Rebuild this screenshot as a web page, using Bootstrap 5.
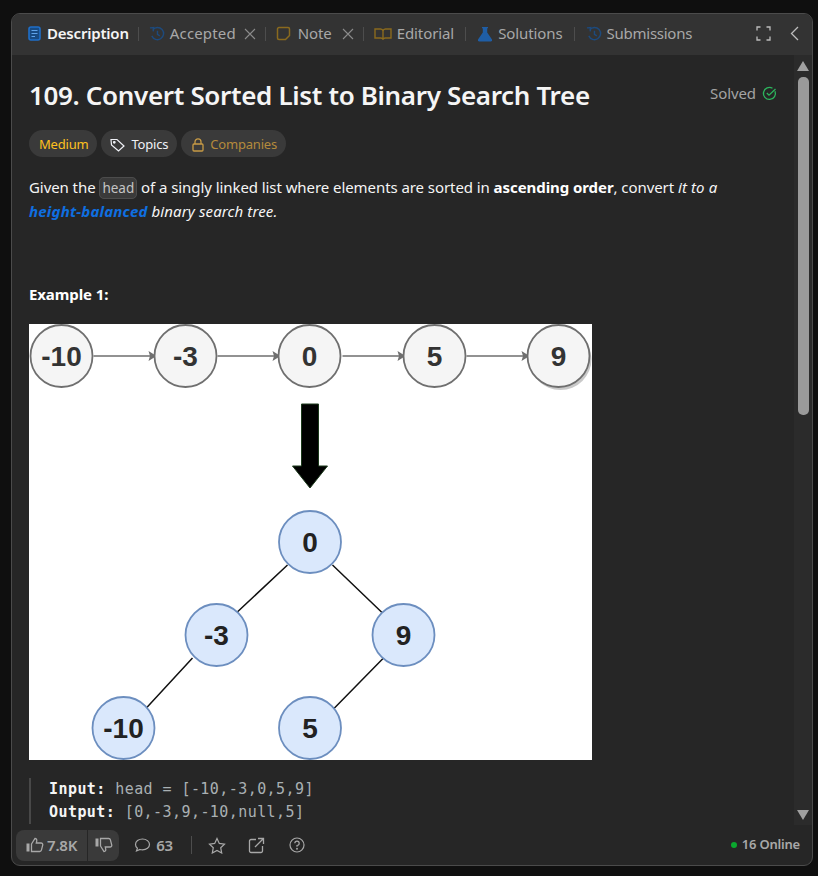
<!DOCTYPE html>
<html lang="en">
<head>
  <meta charset="UTF-8" />
  <meta name="viewport" content="width=device-width, initial-scale=1.0"/>
  <title>109. Convert Sorted List to Binary Search Tree</title>
  <link href="https://cdn.jsdelivr.net/npm/bootstrap@5.3.3/dist/css/bootstrap.min.css" rel="stylesheet"/>
  <style>
    html, body { height: 876px; overflow: hidden; }
    body { background: #0f0f0f; color: #eff1f6; font-family: "Noto Sans", "Open Sans", sans-serif; font-size: 14px; padding: 13px 5px 10px 11px; }
    .lc-panel { height: 853px; background: #262626; border: 1px solid #4b4b4b; border-radius: 9px; overflow: hidden; }
    .lc-tabs { height: 41px; background: #333; padding: 0 13px 2px 16px; flex: none; }
    .lc-tab { font-size: 15px; color: #a8a8a8; letter-spacing: -.1px; white-space: nowrap; gap: 5px; }
    .lc-tab.on { color: #f5f5f5; font-weight: 600; gap: 6px; letter-spacing: -.2px; }
    .lc-tab.roomy { letter-spacing: .15px; }
    .lc-tab.note { gap: 7px; }
    .lc-tab.tight { letter-spacing: -.25px; }
    .lc-sep { width: 1px; height: 14px; background: #4d4d4d; margin: 0 10px 0 9px; flex: none; }
    .lc-sep.wide { margin: 0 11px 0 11px; }
    .lc-x { margin-left: 3px; }
    .lc-tools { gap: 19px; }
    .lc-body { min-height: 0; }
    .lc-content { padding: 0 0 0 17px; min-width: 0; overflow: hidden; }
    .lc-head { margin-top: 23px; }
    .lc-title { font-size: 26px; font-weight: 600; line-height: 34px; letter-spacing: -.34px; color: #f5f5f5; margin: 0; white-space: nowrap; }
    .lc-solved { font-size: 15px; color: #a3a3a3; letter-spacing: -.1px; margin: 0 17px 0 0; padding-bottom: 3px; gap: 6px; }
    .lc-pills { margin-top: 18px; gap: 4px; }
    .lc-pill { height: 27px; border-radius: 14px; background: #3a3a3a; font-size: 13px; letter-spacing: -.2px; padding: 2px 9px 0; gap: 6px; }
    .lc-pill.level { color: #ffc01e; padding: 2px 9px 0 10px; }
    .lc-pill.topics { color: #eff1f6; }
    .lc-pill.locked { color: #b48a3c; padding: 2px 9px 0 11px; }
    .lc-desc { font-size: 15px; line-height: 24px; letter-spacing: -.07px; color: #f5f5f5; margin: 18px 0 0; width: 720px; }
    .lc-desc b { font-weight: 700; color: #fff; }
    .lc-desc i { letter-spacing: .12px; }
    .lc-code { font-family: "Noto Sans", sans-serif; font-size: 13.5px; line-height: 1; color: #c4c4c4; background: #3a3a3a; border: 1px solid #4c4c4c; border-radius: 5px; padding: 1px 2px; letter-spacing: 0; }
    .lc-link { color: #0f6fe0; font-weight: 700; font-style: italic; letter-spacing: .2px; }
    .lc-ex { font-size: 15px; font-weight: 700; letter-spacing: -.1px; color: #fff; line-height: 20px; margin: 61px 0 20px; }
    .lc-img { display: block; width: 563px; height: 436px; background: #fff; }
    .lc-pre { font-family: "DejaVu Sans Mono", monospace; font-size: 15px; line-height: 23px; color: #a9b0b3; border-left: 2px solid #484848; margin: 18px 0 0; padding: 0 0 0 18px; white-space: pre; letter-spacing: .43px; }
    .lc-pre b { color: #f5f5f5; font-weight: 700; }
    .lc-scroll { width: 18px; flex: none; background: #2b2b2b; padding: 6px 0 5px; }
    .lc-thumb { width: 11px; height: 338px; background: #9a9a9a; border-radius: 5px; margin-top: 6px; }
    .lc-arrow { width: 0; height: 0; border-left: 6.5px solid transparent; border-right: 6.5px solid transparent; }
    .lc-arrow.up { border-bottom: 10px solid #a0a0a0; }
    .lc-arrow.down { border-top: 10px solid #a0a0a0; margin-top: auto; }
    .lc-foot { height: 40px; flex: none; padding: 0 12px 0 4px; font-size: 15px; font-weight: 600; color: #a8a8a8; letter-spacing: -.2px; }
    .lc-vote { height: 31px; background: #3a3a3a; border-radius: 8px; }
    .lc-vote > div { padding: 0 10px; height: 100%; gap: 3px; }
    .lc-vote > div + div { border-left: 1px solid #262626; padding: 0 6px 0 7px; }
    .lc-comments { gap: 5px; margin-left: 15px; }
    .lc-sep.tall { margin: 0 16px 0 18px; height: 18px; }
    .lc-gap-share { margin-left: 22px; }
    .lc-gap-help { margin-left: 24px; }
    .lc-online { gap: 5px; font-size: 13px; }
    .lc-dot { width: 6px; height: 6px; background: #0aa82e; border-radius: 50%; }
    svg { flex: none; display: block; }
  </style>
</head>
<body>
  <div class="lc-panel d-flex flex-column">

    <!-- Tabs -->
    <div class="lc-tabs d-flex align-items-center">
      <div class="lc-tab on d-flex align-items-center">
        <svg width="13" height="15" viewBox="0 0 13 15" fill="none"><rect x="1" y="1" width="11" height="13" rx="2" stroke="#1f6fc9" stroke-width="1.600" fill="#174a82"/><path d="M3.500 4.500h6M3.500 7.500h6M3.500 10.500h3.500" stroke="#5fa3ea" stroke-width="1.100"/></svg>
        Description
      </div>
      <div class="lc-sep"></div>
      <div class="lc-tab roomy d-flex align-items-center">
        <svg width="16" height="16" viewBox="0 0 17 16" fill="none" stroke="#1d4a7d" stroke-width="1.500"><path d="M4 3.400A6.500 6.500 0 1 1 3 10"/><path d="M1 1.500 5 1.200 4.400 5.200"/><path d="M9 4.500v4l2.500 1.500"/></svg>
        Accepted
        <svg class="lc-x" width="12" height="12" viewBox="0 0 12 12" stroke="#8a8a8a" stroke-width="1.100"><path d="M1 1l10 10M11 1 1 11"/></svg>
      </div>
      <div class="lc-sep"></div>
      <div class="lc-tab note d-flex align-items-center">
        <svg width="15" height="15" viewBox="0 0 15 15" fill="none" stroke="#8a6a1e" stroke-width="1.500"><path d="M3 1.500h9a1.500 1.500 0 0 1 1.500 1.500v6.500l-4 4H3A1.500 1.500 0 0 1 1.500 12V3A1.500 1.500 0 0 1 3 1.500z"/></svg>
        Note
        <svg class="lc-x" width="12" height="12" viewBox="0 0 12 12" stroke="#8a8a8a" stroke-width="1.100"><path d="M1 1l10 10M11 1 1 11"/></svg>
      </div>
      <div class="lc-sep"></div>
      <div class="lc-tab d-flex align-items-center">
        <svg width="18" height="14" viewBox="0 0 18 14" fill="none" stroke="#8a6a1e" stroke-width="1.400"><path d="M1 2h5.500A2.500 2.500 0 0 1 9 4v8.500A2.500 2.500 0 0 0 6.500 11H1zM17 2h-5.500A2.500 2.500 0 0 0 9 4v8.500A2.500 2.500 0 0 1 11.500 11H17z"/></svg>
        Editorial
      </div>
      <div class="lc-sep wide"></div>
      <div class="lc-tab d-flex align-items-center">
        <svg width="16" height="16" viewBox="0 0 16 16"><path d="M5 1h6v1.200h-.8v4.300L15 13.500A1.500 1.500 0 0 1 13.700 15.500H2.300A1.500 1.500 0 0 1 1 13.500L5.800 6.500V2.200H5z" fill="#1f5ea6"/></svg>
        Solutions
      </div>
      <div class="lc-sep wide"></div>
      <div class="lc-tab tight d-flex align-items-center">
        <svg width="16" height="16" viewBox="0 0 17 16" fill="none" stroke="#1d4a7d" stroke-width="1.500"><path d="M4 3.400A6.500 6.500 0 1 1 3 10"/><path d="M1 1.500 5 1.200 4.400 5.200"/><path d="M9 4.500v4l2.500 1.500"/></svg>
        Submissions
      </div>
      <div class="lc-tools ms-auto d-flex align-items-center">
        <svg width="15" height="15" viewBox="0 0 15 15" fill="none" stroke="#bdbdbd" stroke-width="1.300"><path d="M1 4.500V1h3.500M10.500 1H14v3.500M14 10.500V14h-3.500M4.500 14H1v-3.500"/></svg>
        <svg width="9" height="15" viewBox="0 0 9 15" fill="none" stroke="#bdbdbd" stroke-width="1.300"><path d="M8 1 1.500 7.500 8 14"/></svg>
      </div>
    </div>

    <div class="lc-body d-flex flex-grow-1">
      <div class="lc-content flex-grow-1">
        <div class="lc-head d-flex justify-content-between align-items-center">
          <h1 class="lc-title">109. Convert Sorted List to Binary Search Tree</h1>
          <div class="lc-solved d-flex align-items-center">
            Solved
            <svg width="15" height="15" viewBox="0 0 15 15" fill="none" stroke="#2cb55d" stroke-width="1.300"><path d="M13 5.200A6 6 0 1 1 10.500 2.300"/><path d="M4.800 7 7 9.200 13.500 3"/></svg>
          </div>
        </div>

        <div class="lc-pills d-flex">
          <div class="lc-pill level d-flex align-items-center">Medium</div>
          <div class="lc-pill topics d-flex align-items-center">
            <svg width="15" height="14" viewBox="0 0 15 14" fill="none" stroke="#eff1f6" stroke-width="1.200"><path d="M1 1.500h6l7 6.500-5.500 5L1.500 7z"/><circle cx="4.300" cy="4.300" r=".8" fill="#eff1f6"/></svg>
            Topics
          </div>
          <div class="lc-pill locked d-flex align-items-center">
            <svg width="12" height="14" viewBox="0 0 12 14" fill="none" stroke="#c89b45" stroke-width="1.300"><rect x="1" y="6" width="10" height="7" rx="1"/><path d="M3 6V3.800a3 3 0 0 1 6 0V6"/></svg>
            Companies
          </div>
        </div>

        <p class="lc-desc">Given the <code class="lc-code">head</code> of a singly linked list where elements are sorted in <b>ascending order</b>, convert <i>it to a</i><br><span class="lc-link">height-balanced</span> <i>binary search tree.</i></p>

        <p class="lc-ex">Example 1:</p>

        <svg class="lc-img" viewBox="-0.5 0 563 436" font-family="Liberation Sans, sans-serif" font-weight="700" font-size="28" text-anchor="middle">
          <g stroke="#6f6f6f" stroke-width="1.500">
            <path d="M64 32h58M188 32h58M313 32h58M437 32h58"/>
          </g>
          <g fill="#6f6f6f">
            <path d="M127 32l-8-5 1.500 5-1.500 5zM251 32l-8-5 1.500 5-1.500 5zM376 32l-8-5 1.500 5-1.500 5zM500 32l-8-5 1.500 5-1.500 5z"/>
          </g>
          <circle cx="531" cy="35" r="31" fill="#c9c9c9"/>
          <g fill="#f5f5f5" stroke="#6f6f6f" stroke-width="1.800">
            <circle cx="32" cy="32" r="31"/><circle cx="156" cy="32" r="31"/><circle cx="280" cy="32" r="31"/><circle cx="405" cy="32" r="31"/><circle cx="529" cy="32" r="31"/>
          </g>
          <g fill="#333">
            <text x="32" y="42">-10</text><text x="156" y="42">-3</text><text x="280" y="42">0</text><text x="405" y="42">5</text><text x="529" y="42">9</text>
          </g>
          <path d="M272 80h17v62h9l-17.500 22-17.500-22h9z" fill="#000" stroke="#1c3a1c"/>
          <g stroke="#111" stroke-width="1.500">
            <path d="M258 241 164 329 M303 241 353 289 M163 334 115 386 M354 334 303 386"/>
          </g>
          <g fill="#dae8fc" stroke="#6c8ebf" stroke-width="1.800">
            <circle cx="280.500" cy="218" r="31"/><circle cx="187" cy="311" r="31"/><circle cx="374" cy="311" r="31"/><circle cx="94" cy="404" r="31"/><circle cx="280.500" cy="404" r="31"/>
          </g>
          <g fill="#222">
            <text x="280.500" y="228">0</text><text x="187" y="321">-3</text><text x="374" y="321">9</text><text x="94" y="414">-10</text><text x="280.500" y="414">5</text>
          </g>
        </svg>

        <div class="lc-pre"><b>Input:</b> head = [-10,-3,0,5,9]
<b>Output:</b> [0,-3,9,-10,null,5]</div>
      </div>

      <div class="lc-scroll d-flex flex-column align-items-center">
        <div class="lc-arrow up"></div>
        <div class="lc-thumb"></div>
        <div class="lc-arrow down"></div>
      </div>
    </div>

    <!-- Footer -->
    <div class="lc-foot d-flex align-items-center">
      <div class="lc-vote d-flex align-items-center">
        <div class="d-flex align-items-center">
          <svg width="18" height="16" viewBox="0 0 18 16" fill="none" stroke="#a8a8a8" stroke-width="1.300"><rect x=".5" y="6.500" width="3" height="8" fill="#a8a8a8" stroke="none"/><path d="M5.500 7 9 1.500c1.500 0 2 1.200 1.700 2.500L10.300 6H15c1.300 0 2 1 1.700 2.200l-1.300 5c-.2.800-.9 1.300-1.700 1.300H5.500z"/></svg>
          7.8K
        </div>
        <div class="d-flex align-items-center">
          <svg width="18" height="16" viewBox="0 0 18 16" fill="none" stroke="#a8a8a8" stroke-width="1.300"><rect x=".5" y="1.500" width="3" height="8" fill="#a8a8a8" stroke="none"/><path d="M5.500 9 9 14.500c1.500 0 2-1.200 1.700-2.500l-.4-2H15c1.300 0 2-1 1.700-2.200l-1.300-5c-.2-.8-.9-1.300-1.700-1.300H5.500z"/></svg>
        </div>
      </div>
      <div class="lc-comments d-flex align-items-center">
        <svg width="17" height="16" viewBox="0 0 17 16" fill="none" stroke="#a8a8a8" stroke-width="1.200"><path d="M8.500 2C4.600 2 1.500 4.400 1.500 7.500c0 1.500.7 2.800 1.900 3.800L2.500 14l3.500-1.500c.8.200 1.600.3 2.500.3 3.900 0 7-2.300 7-5.300S12.400 2 8.500 2z"/></svg>
        63
      </div>
      <div class="lc-sep tall"></div>
      <svg width="18" height="17" viewBox="0 0 18 17" fill="none" stroke="#a8a8a8" stroke-width="1.200"><path d="M9 1.500l2.300 4.900 5.200.7-3.800 3.600 1 5.300L9 13.400l-4.700 2.600 1-5.300L1.500 7.100l5.200-.7z"/></svg>
      <svg class="lc-gap-share" width="17" height="17" viewBox="0 0 17 17" fill="none" stroke="#a8a8a8" stroke-width="1.300"><path d="M8 2.500H3a1.500 1.500 0 0 0-1.500 1.500v10A1.500 1.500 0 0 0 3 15.500h10a1.500 1.500 0 0 0 1.500-1.500V9"/><path d="M7 10 15.500 1.500M10 1.500h5.500V7"/></svg>
      <svg class="lc-gap-help" width="16" height="16" viewBox="0 0 16 16" fill="none" stroke="#a8a8a8" stroke-width="1.200"><circle cx="8" cy="8" r="7"/><path d="M5.800 6.200A2.200 2.200 0 1 1 8 8.500v1.200"/><circle cx="8" cy="11.700" r=".4" fill="#a8a8a8"/></svg>
      <div class="lc-online ms-auto d-flex align-items-center">
        <span class="lc-dot"></span>16 Online
      </div>
    </div>
  </div>
</body>
</html>
